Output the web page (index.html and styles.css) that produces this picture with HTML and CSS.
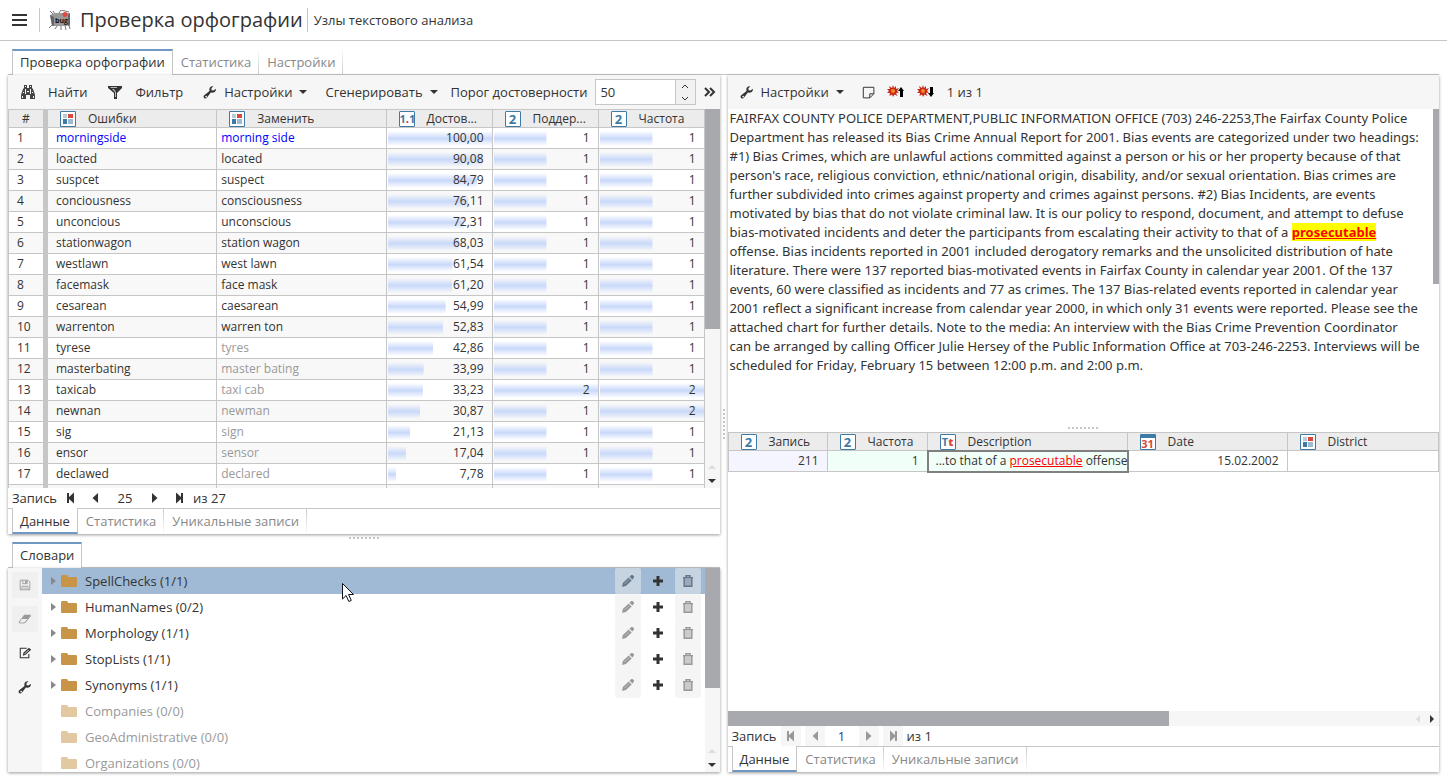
FILE: index.html
```html
<!DOCTYPE html>
<html lang="ru">
<head>
    <meta charset="utf-8">
    <title>Проверка орфографии</title>
    <link rel="stylesheet" href="styles.css">
</head>
<body>
    <svg class="sprite" aria-hidden="true">
        <symbol id="i-binoculars" viewBox="0 0 16 16"><path fill="#444" d="M4 1h3v3h2V1h3v3l1 1 2 6v4h-5v-4H6v4H1v-4l2-6 1-1z"/><path fill="#f7f7f7" d="M5 5h1v5H5zM10 5h1v5h-1zM2 12h1v2H2zM13 12h1v2h-1zM5 2h1v1H5zM10 2h1v1h-1zM7 7h2v1H7zM3 8h1v1H3zM12 8h1v1h-1z"/></symbol>
        <symbol id="i-filter" viewBox="0 0 16 16"><path fill="#333" d="M1 2h14v2l-5 5v6H7V9L1 4z"/><path fill="#bbb" d="M3 3h7v1H4zM5 5h2l2 3v5H8V8z"/></symbol>
        <symbol id="i-wrench" viewBox="0 0 16 16"><path fill="#333" d="M14.7 4.2 12 6.2 9.8 5.9 9.600 3.700 11.900 1.400C9 .9 6.900 3 7.300 5.700L7.500 6.900 1.400 11.700C.2 12.800.5 14.400 1.600 15 2.700 15.700 3.900 15.200 4.600 14.200L9 8.600C12.400 9.300 15.200 7.400 14.700 4.200zM3.600 12.200a1 1 0 1 1-1 1 1 1 0 0 1 1-1z"/></symbol>
        <symbol id="i-pencil" viewBox="0 0 16 16"><path d="m2 14 .8-4 5.900-5.500 3 3L5.900 13zM9.500 3.700 11 2.300c.7-.5 1.500-.5 2.100.1l.6.7c.6.6.5 1.400 0 2l-1.300 1.400z"/><path fill="#fff" opacity=".3" d="m4.300 10.600 5-4.700.6.600-5 4.700zM2.700 12.400l.9.900-1 .3z"/></symbol>
        <symbol id="i-plus" viewBox="0 0 16 16"><path d="M6.500 3h3v3.500H13v3H9.500V13h-3V9.500H3v-3h3.500z"/></symbol>
        <symbol id="i-trash" viewBox="0 0 16 16"><path fill="none" stroke="currentColor" stroke-width="1.500" d="M4.200 5.500v7.700h7.600V5.500M3 4.700h10M6 4V2.700h4V4"/><path opacity=".45" d="M5 6h6v7H5z"/></symbol>
        <symbol id="i-folder" viewBox="0 0 16 16"><path d="M0 3.500C0 2.500.6 2 1.500 2h4c.8 0 1.300.6 1.500 2h7.500c1 0 1.500.5 1.500 1.500v7c0 1-.5 1.500-1.500 1.500h-13C.5 14 0 13.500 0 12.500z"/></symbol>
        <symbol id="i-save" viewBox="0 0 16 16"><path fill="none" stroke="#999" d="M2.500 2.500h9l2 2v9h-11zM5.500 2.500v4h5v-4M4.500 13.500v-4h7v4"/><path fill="#999" d="M8 3h2v3H8zM6 11h4v1H6z"/></symbol>
        <symbol id="i-eraser" viewBox="0 0 16 16"><path fill="#999" d="M7 3h8l-3.500 5H3.500z"/><path fill="none" stroke="#999" d="M3.700 8 1.500 11.500v1h6l3.700-4.500M7.500 12.500l7-8"/></symbol>
        <symbol id="i-edit" viewBox="0 0 16 16"><path fill="none" stroke="#333" stroke-width="1.200" d="M10 2.600H2.600v10.800h9.800V9"/><path fill="#333" d="m5.500 11 .7-3.200L12.500 2 15 4.200 8.700 10z"/><path fill="#fff" d="m7 9 5-4.600.5.500-5 4.600z"/></symbol>
        <symbol id="i-note" viewBox="0 0 16 16"><path fill="none" stroke="#333" stroke-width="1.200" d="M1.600 1.600h13v8l-5 5h-8zM14.600 9.600h-5v5"/></symbol>
        <symbol id="i-burst" viewBox="0 0 12 12"><path fill="#c8281c" d="M6 0l1 3 2-2v3l3-1-2 3 2 1.500-3 .5 1.500 3L7.500 9.500 6 12 5 9.500 2.500 11l.5-3L0 8l2-2-2-2h3L2 1l3 2z"/><circle cx="6" cy="6" r="2" fill="#f38a1c"/></symbol>
        <symbol id="i-first" viewBox="0 0 16 16"><path d="M4 3h2v4l5-4.500v11L6 9v4H4z"/></symbol>
        <symbol id="i-prev" viewBox="0 0 16 16"><path d="M11 3v10L5.500 8z"/></symbol>
        <symbol id="i-next" viewBox="0 0 16 16"><path d="M5 3v10l5.500-5z"/></symbol>
        <symbol id="i-last" viewBox="0 0 16 16"><path d="M12 3h-2v4L5 2.500v11L10 9v4h2z"/></symbol>
        <symbol id="t-string" viewBox="0 0 16 16"><path fill="#fff" stroke="#3d7aa5" d="M.5.500h15v15H.5z"/><path fill="#b7cbd9" d="M3 3h4v4H3z"/><path fill="#d9483b" d="M8 3h5v4H8z"/><path fill="#3d7aa5" d="M3 8h4v5H3z"/><path fill="#9dbad0" d="M8 8h5v5H8z"/></symbol>
    </svg>

    <header class="header">
        <button class="menu" aria-label="Меню"><span></span><span></span><span></span></button>
        <svg class="logo" viewBox="0 0 22 20">
            <path fill="none" stroke="#777" d="M1 1l3 3M0 18l3-3M8 16l-2 3M12 16v4M16 16l1 4M20 15l1 4M4 1l2 3M10 3l2-3 8 2"/>
            <path fill="#999" d="M1 5l5-2h15v12l-3 1H3z"/>
            <path fill="#666" d="M1 5l4 2v9l-2-1zM19 5l2-2v12l-2 1z"/>
            <circle cx="16" cy="4.500" r="2.500" fill="#e04a3c"/>
            <text x="6" y="13" class="bug">bug</text>
        </svg>
        <h1>Проверка орфографии</h1>
        <p>Узлы текстового анализа</p>
    </header>

    <nav class="tabs tabs-main">
        <a class="tab active" href="#">Проверка орфографии</a>
        <a class="tab" href="#">Статистика</a>
        <a class="tab" href="#">Настройки</a>
    </nav>

    <main class="workspace">
        <div class="left">
            <section class="panel errors">
                <div class="toolbar">
                    <button class="tool wide"><svg><use href="#i-binoculars"/></svg>Найти</button>
                    <button class="tool wide"><svg><use href="#i-filter"/></svg>Фильтр</button>
                    <button class="tool"><svg><use href="#i-wrench"/></svg>Настройки<i class="caret"></i></button>
                    <button class="tool last">Сгенерировать<i class="caret"></i></button>
                    <label for="threshold">Порог достоверности</label>
                    <div class="spinner">
                        <input id="threshold" type="text" value="50">
                        <div class="spin">
                            <button aria-label="Больше"><svg viewBox="0 0 8 5"><path d="M1 4l3-3 3 3"/></svg></button>
                            <button aria-label="Меньше"><svg viewBox="0 0 8 5"><path d="M1 1l3 3 3-3"/></svg></button>
                        </div>
                    </div>
                    <button class="more" aria-label="Ещё"><svg viewBox="0 0 12 10"><path d="M1 1l4 4-4 4M6 1l4 4-4 4"/></svg></button>
                </div>
                <div class="scroll">
                    <div class="view">
                        <table class="grid">
                            <colgroup><col class="c-num"><col><col><col class="c-val"><col class="c-val"><col class="c-val"></colgroup>
                            <thead>
                                <tr>
                                    <th class="num">#</th>
                                    <th><div><svg><use href="#t-string"/></svg>Ошибки</div></th>
                                    <th><div><svg><use href="#t-string"/></svg>Заменить</div></th>
                                    <th><div><i class="type">1<b>.</b>1</i>Достов...</div></th>
                                    <th><div><i class="type">2</i>Поддер...</div></th>
                                    <th><div><i class="type">2</i>Частота</div></th>
                                </tr>
                            </thead>
                            <tbody id="rows"></tbody>
                        </table>
                    </div>
                    <div class="bar"><div class="thumb" style="height: 58%"></div><i class="up"></i><i class="down"></i></div>
                </div>
                <div class="pager">
                    <label for="rec1">Запись</label>
                    <button aria-label="Первая"><svg><use href="#i-first"/></svg></button>
                    <button aria-label="Предыдущая"><svg><use href="#i-prev"/></svg></button>
                    <input id="rec1" type="text" value="25">
                    <button aria-label="Следующая"><svg><use href="#i-next"/></svg></button>
                    <button aria-label="Последняя"><svg><use href="#i-last"/></svg></button>
                    <span>из 27</span>
                </div>
                <nav class="tabs tabs-bottom">
                    <a class="tab active" href="#">Данные</a>
                    <a class="tab" href="#">Статистика</a>
                    <a class="tab" href="#">Уникальные записи</a>
                </nav>
            </section>

            <div class="split-h"><i></i></div>

            <section class="dicts">
                <nav class="tabs"><a class="tab active" href="#">Словари</a></nav>
                <div class="panel dict-body">
                    <div class="side">
                        <button disabled aria-label="Сохранить"><svg><use href="#i-save"/></svg></button>
                        <button disabled aria-label="Очистить"><svg><use href="#i-eraser"/></svg></button>
                        <button aria-label="Изменить"><svg><use href="#i-edit"/></svg></button>
                        <button aria-label="Настройки"><svg><use href="#i-wrench"/></svg></button>
                    </div>
                    <ul class="tree" id="tree"></ul>
                    <div class="bar"><div class="thumb" style="height: 59%"></div><i class="up"></i><i class="down"></i></div>
                    <svg class="cursor" viewBox="0 0 12 19"><path d="M.5.500v15.500l3.600-3.500 2.700 6 2.500-1.100-2.700-5.900h4.900z"/></svg>
                </div>
            </section>
        </div>

        <div class="split-v"><i></i></div>

        <div class="right panel">
            <div class="toolbar">
                <button class="tool"><svg><use href="#i-wrench"/></svg>Настройки<i class="caret"></i></button>
                <button class="tool icon" aria-label="Заметка"><svg><use href="#i-note"/></svg></button>
                <button class="tool icon burst" aria-label="Вверх"><svg viewBox="0 0 18 14"><use href="#i-burst" width="12" height="12"/><path d="M14 2l3 4h-1v6h-3V6h-2z"/></svg></button>
                <button class="tool icon burst" aria-label="Вниз"><svg viewBox="0 0 18 14"><use href="#i-burst" width="12" height="12"/><path d="M13 2h3v6h1l-3 4-3-4h2z"/></svg></button>
                <span>1 из 1</span>
            </div>
            <div class="doc">
                <p>FAIRFAX COUNTY POLICE DEPARTMENT,PUBLIC INFORMATION OFFICE (703) 246-2253,The Fairfax County Police Department has released its Bias Crime Annual Report for 2001. Bias events are categorized under two headings: #1) Bias Crimes, which are unlawful actions committed against a person or his or her property because of that person's race, religious conviction, ethnic/national origin, disability, and/or sexual orientation. Bias crimes are further subdivided into crimes against property and crimes against persons. #2) Bias Incidents, are events motivated by bias that do not violate criminal law. It is our policy to respond, document, and attempt to defuse bias-motivated incidents and deter the participants from escalating their activity to that of a <mark>prosecutable</mark> offense. Bias incidents reported in 2001 included derogatory remarks and the unsolicited distribution of hate literature. There were 137 reported bias-motivated events in Fairfax County in calendar year 2001. Of the 137 events, 60 were classified as incidents and 77 as crimes. The 137 Bias-related events reported in calendar year 2001 reflect a significant increase from calendar year 2000, in which only 31 events were reported. Please see the attached chart for further details. Note to the media: An interview with the Bias Crime Prevention Coordinator can be arranged by calling Officer Julie Hersey of the Public Information Office at 703-246-2253. Interviews will be scheduled for Friday, February 15 between 12:00 p.m. and 2:00 p.m.</p>
                <div class="thin-bar"></div>
            </div>
            <div class="split-h"><i></i></div>
            <div class="records">
                <div class="view">
                    <table class="grid">
                        <colgroup><col class="c-first"><col class="c-rec"><col class="c-desc"><col class="c-date"><col></colgroup>
                        <thead>
                            <tr>
                                <th><div><i class="type">2</i>Запись</div></th>
                                <th><div><i class="type">2</i>Частота</div></th>
                                <th><div><i class="type">T<b>t</b></i>Description</div></th>
                                <th><div><i class="type date">31</i>Date</div></th>
                                <th><div><svg><use href="#t-string"/></svg>District</div></th>
                            </tr>
                        </thead>
                        <tbody>
                            <tr>
                                <td class="val lilac">211</td>
                                <td class="val mint">1</td>
                                <td class="mint selected">...to that of a <u>prosecutable</u> offense</td>
                                <td class="val">15.02.2002</td>
                                <td></td>
                            </tr>
                        </tbody>
                    </table>
                </div>
                <div class="hbar"><div class="thumb" style="width: 62%"></div><i class="back"></i><i class="forward"></i></div>
                <div class="pager">
                    <label for="rec2">Запись</label>
                    <button disabled aria-label="Первая"><svg><use href="#i-first"/></svg></button>
                    <button disabled aria-label="Предыдущая"><svg><use href="#i-prev"/></svg></button>
                    <input id="rec2" class="one" type="text" value="1">
                    <button disabled aria-label="Следующая"><svg><use href="#i-next"/></svg></button>
                    <button disabled aria-label="Последняя"><svg><use href="#i-last"/></svg></button>
                    <span>из 1</span>
                </div>
                <nav class="tabs tabs-bottom">
                    <a class="tab active" href="#">Данные</a>
                    <a class="tab" href="#">Статистика</a>
                    <a class="tab" href="#">Уникальные записи</a>
                </nav>
            </div>
        </div>
    </main>

    <script>
        // ошибка, замена, достоверность, поддержка, частота
        var data = [
            ["morningside", "morning side", 100, 1, 1],
            ["loacted", "located", 90.08, 1, 1],
            ["suspcet", "suspect", 84.79, 1, 1],
            ["conciousness", "consciousness", 76.11, 1, 1],
            ["unconcious", "unconscious", 72.31, 1, 1],
            ["stationwagon", "station wagon", 68.03, 1, 1],
            ["westlawn", "west lawn", 61.54, 1, 1],
            ["facemask", "face mask", 61.20, 1, 1],
            ["cesarean", "caesarean", 54.99, 1, 1],
            ["warrenton", "warren ton", 52.83, 1, 1],
            ["tyrese", "tyres", 42.86, 1, 1],
            ["masterbating", "master bating", 33.99, 1, 1],
            ["taxicab", "taxi cab", 33.23, 2, 2],
            ["newnan", "newman", 30.87, 1, 2],
            ["sig", "sign", 21.13, 1, 1],
            ["ensor", "sensor", 17.04, 1, 1],
            ["declawed", "declared", 7.78, 1, 1]
        ];

        function cell(text, percent) {
            return `<td class="val meter" style="background-size: ${percent}% 15px">${text}</td>`;
        }

        var html = "";
        data.forEach(function (r, i) {
            html += `<tr class="${i == 0 ? "current" : ""}"><td class="num">${i + 1}</td><td>${r[0]}</td>`;
            html += `<td class="fix ${r[2] < 50 ? "weak" : ""}">${r[1]}</td>`;
            html += cell(r[2].toFixed(2).replace(".", ","), r[2]) + cell(r[3], r[3] * 50) + cell(r[4], r[4] * 50) + "</tr>";
        });
        // хвост следующей строки под нижней границей
        html += `<tr><td class="num"></td><td></td><td></td><td></td><td></td><td></td></tr>`;
        document.getElementById("rows").innerHTML = html;

        var dicts = [
            ["SpellChecks", "1/1"], ["HumanNames", "0/2"], ["Morphology", "1/1"], ["StopLists", "1/1"],
            ["Synonyms", "1/1"], ["Companies", "0/0"], ["GeoAdministrative", "0/0"], ["Organizations", "0/0"]
        ];
        document.getElementById("tree").innerHTML = dicts.map(function (d, i) {
            var empty = d[1] == "0/0";
            var actions = empty ? "" : `<button disabled aria-label="Изменить"><svg><use href="#i-pencil"/></svg></button>
                <button aria-label="Добавить"><svg><use href="#i-plus"/></svg></button>
                <button disabled aria-label="Удалить"><svg><use href="#i-trash"/></svg></button>`;
            return `<li class="${empty ? "empty" : ""} ${i == 0 ? "chosen" : ""}"><i class="arrow"></i>
                <svg class="folder"><use href="#i-folder"/></svg><span>${d[0]} (${d[1]})</span>${actions}</li>`;
        }).join("");
    </script>
</body>
</html>
```
FILE: styles.css
```css
* {
    box-sizing: border-box;
}
body {
    margin: 0;
    height: 100vh;
    display: flex;
    flex-direction: column;
    overflow: hidden;
    background: #fff;
    color: #333;
    font: 13px/20px "Open Sans", "Noto Sans", sans-serif;
}
button, input {
    font: inherit;
    color: inherit;
    border: 0;
    padding: 0;
    background: none;
}
svg {
    width: 16px;
    height: 16px;
    flex: none;
    fill: currentColor;
}
.sprite {
    position: absolute;
    width: 0;
    height: 0;
}

/* шапка */
.header {
    display: flex;
    align-items: center;
    height: 41px;
    border-bottom: 1px solid #c6c6c6;
}
.menu {
    width: 40px;
    height: 24px;
    padding: 0 12px;
    border-right: 1px solid #c6c6c6;
    display: flex;
    flex-direction: column;
    justify-content: center;
    gap: 3px;
}
.menu span {
    height: 2px;
    width: 15px;
    background: #333;
}
.logo {
    width: 22px;
    height: 20px;
    margin: 0 9px;
}
.bug {
    font: bold 7px "Open Sans", sans-serif;
    fill: #111;
}
.header h1 {
    margin: 0;
    padding-right: 4px;
    font-size: 20px;
    line-height: 24px;
    font-weight: normal;
    border-right: 1px solid #c6c6c6;
}
.header p {
    margin: 0 6px;
}

/* вкладки */
.tabs {
    display: flex;
    flex: none;
    height: 26px;
    padding-left: 4px;
    box-shadow: inset 0 -1px #c6c6c6;
}
.tabs-main {
    margin: 8px 8px 0;
}
.tab {
    padding: 2px 7px 0 8px;
    line-height: 23px;
    color: #888;
    text-decoration: none;
    border-right: 1px solid;
    border-image: linear-gradient(#fff, #c6c6c6) 1;
}
.tab.active {
    padding-top: 0;
    padding-left: 7px;
    color: #333;
    background: #fff;
    border: 1px solid #c6c6c6;
    border-top: 2px solid #6f98c4;
    border-bottom: 0;
    border-image: none;
}
.tabs-bottom {
    box-shadow: inset 0 1px #c6c6c6;
}
.tabs-bottom .tab {
    border-image: linear-gradient(#c6c6c6, #fff) 1;
}
.tabs-bottom .tab.active {
    padding-top: 2px;
    border-top: 0;
    border-bottom: 2px solid #6f98c4;
    border-image: none;
}

.workspace {
    flex: 1;
    min-height: 0;
    display: grid;
    grid-template-columns: minmax(0, 1fr) 8px minmax(0, 1fr);
    margin: 0 8px 8px;
}
.left, .right, .errors, .dicts, .records {
    display: flex;
    flex-direction: column;
    min-height: 0;
}
.panel {
    box-shadow: 0 1px 3px rgba(0, 0, 0, .4);
    background: #fff;
}
.errors {
    flex: 2 1 0;
}
.dicts {
    flex: 1 1 0;
}
.split-h {
    flex: none;
    height: 8px;
    display: flex;
    align-items: center;
    justify-content: center;
}
.split-h i {
    width: 30px;
    height: 2px;
    background: repeating-linear-gradient(90deg, #c6c6c6 0 2px, transparent 2px 4px);
}
.split-v {
    display: flex;
    align-items: center;
    justify-content: center;
}
.split-v i {
    width: 2px;
    height: 30px;
    background: repeating-linear-gradient(#c6c6c6 0 2px, transparent 2px 4px);
}

/* панель инструментов */
.toolbar {
    flex: none;
    display: flex;
    align-items: center;
    height: 34px;
    padding: 0 4px 0 12px;
    background: #f6f6f6;
    white-space: nowrap;
}
.tool {
    display: flex;
    align-items: center;
    gap: 7px;
    margin-right: 18px;
}
.tool.wide {
    gap: 12px;
    margin-right: 20px;
}
.tool.last {
    margin-right: 13px;
}
.toolbar .tool svg {
    width: 14px;
    height: 14px;
}
.toolbar .tool.wide svg {
    width: 16px;
    height: 16px;
}
.caret {
    border: 4px solid transparent;
    border-top-color: #333;
    border-bottom: 0;
}
.spinner {
    flex: 1;
    min-width: 0;
    display: flex;
    height: 26px;
    margin: 0 8px;
    border: 1px solid #c6c6c6;
    background: #fff;
}
.spinner input {
    flex: 1;
    min-width: 0;
    padding: 0 4px;
}
.spin {
    width: 20px;
    display: flex;
    flex-direction: column;
    background: #f1f1f1;
    border-left: 1px solid #c6c6c6;
}
.spin button {
    flex: 1;
    display: flex;
    align-items: center;
    justify-content: center;
}
.spin svg {
    width: 8px;
    height: 5px;
    fill: none;
    stroke: #333;
}
.more svg {
    display: block;
    width: 12px;
    height: 10px;
    fill: none;
    stroke: #333;
    stroke-width: 2;
}
.tool.icon {
    margin-right: 12px;
}
.toolbar .icon svg {
    width: 13px;
    height: 13px;
}
.toolbar .burst svg {
    width: 18px;
    height: 14px;
    fill: #000;
}

/* таблицы */
.scroll {
    flex: 1;
    min-height: 0;
    display: flex;
}
.view {
    flex: 1;
    min-width: 0;
    overflow: hidden;
}
.grid {
    width: 100%;
    table-layout: fixed;
    border-spacing: 0;
    border-left: 1px solid #c6c6c6;
}
.c-num { width: 39px; }
.c-val { width: 106px; }
.c-first { width: 99px; }
.c-rec { width: 100px; }
.c-desc { width: 200px; }
.c-date { width: 160px; }
.grid th, .grid td {
    padding: 0 8px;
    border-right: 1px solid #c6c6c6;
    border-bottom: 1px solid #c6c6c6;
    white-space: nowrap;
    overflow: hidden;
    text-align: left;
    font-weight: normal;
    font-size: 12px;
}
.grid th {
    height: 19px;
    padding: 0 0 0 12px;
    line-height: 17px;
    background: #ececec;
    border-top: 1px solid #c6c6c6;
}
.grid th div {
    display: flex;
    align-items: center;
    gap: 12px;
}
/* значок типа столбца */
.type {
    width: 16px;
    height: 16px;
    flex: none;
    border: 1px solid #3d7aa5;
    border-radius: 1px;
    background: #fff;
    color: #3d7aa5;
    font: bold 13px/14px "Open Sans", sans-serif;
    text-align: center;
}
.type b {
    color: #d9483b;
}
.type:has(b) {
    font-size: 11px;
}
.type.date {
    border-top-width: 4px;
    color: #d9483b;
    font-size: 11px;
    line-height: 11px;
}
.grid td {
    height: 21px;
}
.grid tbody tr:nth-child(even) {
    background: #f8f8f8;
}
.grid .num {
    border-right: 5px solid #c6c6c6;
}
.grid th.num {
    padding-left: 13px;
}
.grid .fix {
    padding-left: 4px;
}
.grid .val {
    text-align: right;
}
.meter {
    background: linear-gradient(rgba(255, 255, 255, 0), #c9d9fa, rgba(255, 255, 255, 0)) 1px 3px no-repeat;
}
.current td {
    color: #00f;
}
.current .num, .current .val {
    color: #333;
}
.weak {
    color: #999;
}
.lilac { background: #f5f5ff; }
.mint { background: #f0fff8; }
.grid .selected {
    outline: 2px solid #808080;
    outline-offset: -1px;
}
.selected u {
    color: #f00;
}

/* полосы прокрутки */
.bar {
    flex: none;
    width: 15px;
    display: flex;
    flex-direction: column;
    align-items: center;
    background: #f6f6f6;
}
.thumb {
    width: 100%;
    margin-bottom: auto;
    background: #a8a9ae;
}
.bar i {
    border: 4px solid transparent;
}
.bar .up {
    border-top: 0;
    border-bottom-color: #ddd;
    margin-bottom: 10px;
}
.bar .down {
    border-bottom: 0;
    border-top-color: #333;
    margin-bottom: 5px;
}
.hbar {
    flex: none;
    height: 15px;
    display: flex;
    align-items: center;
    background: #f6f6f6;
}
.hbar .thumb {
    height: 15px;
    margin: 0 auto 0 0;
}
.hbar i {
    border: 4px solid transparent;
}
.hbar .back {
    border-left: 0;
    border-right-color: #ddd;
    margin-right: 10px;
}
.hbar .forward {
    border-right: 0;
    border-left-color: #333;
    margin-right: 5px;
}

/* навигация по записям */
.pager {
    flex: none;
    display: flex;
    align-items: center;
    gap: 4px;
    height: 20px;
    padding-left: 4px;
}
.pager button {
    width: 20px;
    height: 20px;
    display: flex;
    align-items: center;
    justify-content: center;
}
.pager button:disabled {
    color: #999;
    background: #f6f6f6;
}
.pager input {
    width: 32px;
    text-align: center;
}
.pager .one {
    width: 26px;
    color: #333399;
}

/* словари */
.dict-body {
    position: relative;
    flex: 1;
    min-height: 0;
    display: flex;
}
.side {
    width: 34px;
    padding: 4px;
    display: flex;
    flex-direction: column;
    gap: 8px;
    background: #f6f6f6;
}
.side button {
    height: 26px;
    display: flex;
    align-items: center;
    justify-content: center;
}
.side button:disabled {
    background: #f0f0f0;
}
.side svg {
    width: 14px;
    height: 14px;
}
.tree {
    flex: 1;
    min-width: 0;
    margin: 0;
    padding: 0;
    list-style: none;
    overflow: hidden;
}
.tree li {
    display: flex;
    align-items: center;
    height: 26px;
    padding: 0 4px 0 9px;
}
.tree span {
    flex: 1;
    margin-left: 8px;
}
.arrow {
    margin-right: 5px;
    border: 4px solid transparent;
    border-left: 5px solid #888;
    border-right: 0;
}
.folder {
    color: #c89448;
}
.empty {
    color: #999;
}
.empty .folder {
    opacity: .5;
}
.empty .arrow {
    visibility: hidden;
}
.tree button {
    width: 26px;
    height: 26px;
    margin-left: 4px;
    display: flex;
    align-items: center;
    justify-content: center;
    border-radius: 2px;
}
.tree button:disabled {
    color: #999;
    background: #f5f5f5;
}
.chosen {
    background: #a0bad6;
}
.tree .chosen button:disabled {
    color: #657789;
    background: #c6d4e2;
}
.cursor {
    position: absolute;
    left: 334px;
    top: 15px;
    width: 12px;
    height: 19px;
    fill: #fff;
    stroke: #112;
}

/* документ и записи */
.doc {
    flex: 1;
    min-height: 0;
    display: flex;
    align-items: flex-start;
    overflow: hidden;
}
.doc p {
    flex: 1;
    margin: 0;
    padding: 0 12px 0 2px;
    font-family: "Noto Sans", "Open Sans", sans-serif;
    line-height: 19px;
}
.doc mark {
    color: #f00;
    background: #ff0;
    font-weight: bold;
    text-decoration: underline;
}
.thin-bar {
    width: 6px;
    height: 175px;
    background: #a8a9ae;
}
.records {
    flex: none;
    height: 340px;
}
```
